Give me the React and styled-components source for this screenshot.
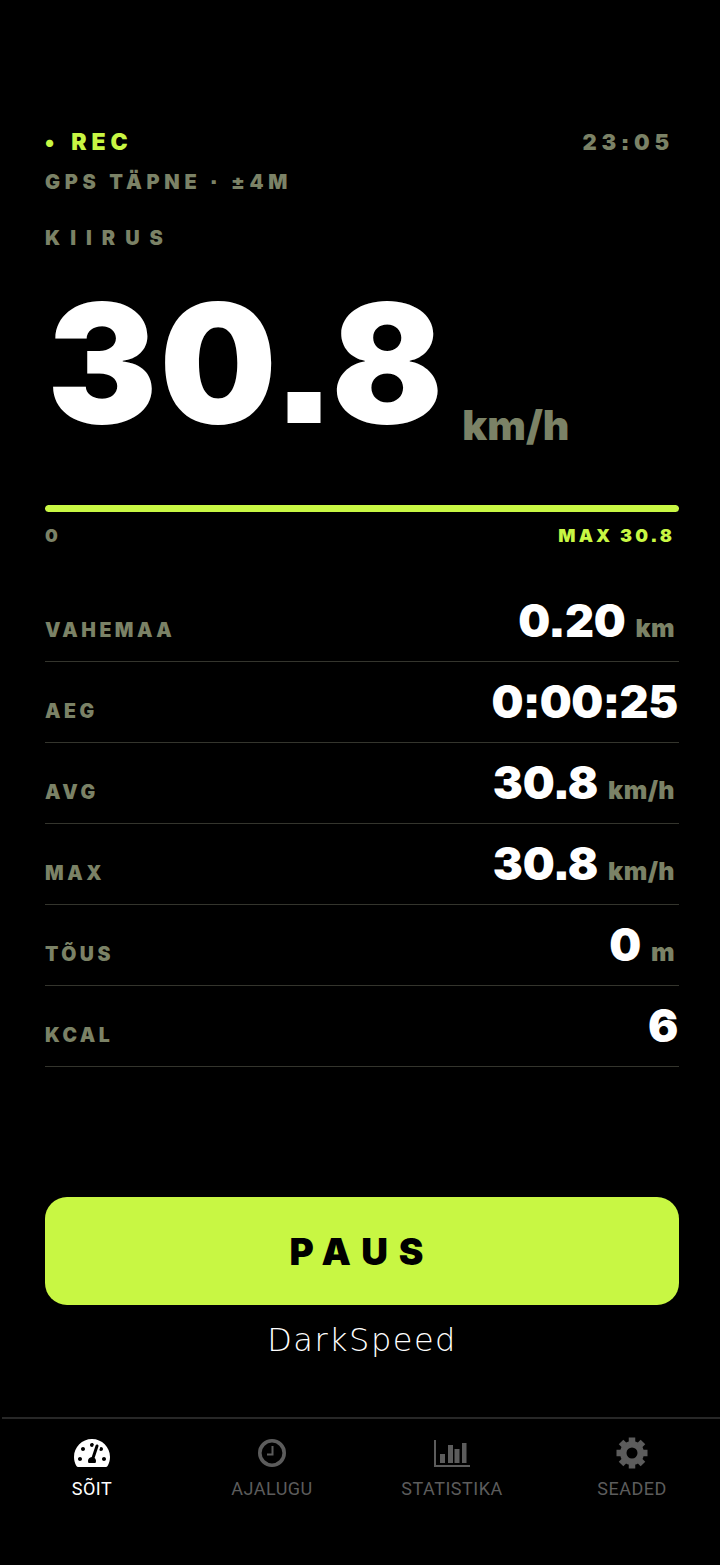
import React from "react";
import styled, { createGlobalStyle } from "styled-components";
import { FaTachometerAlt } from "react-icons/fa";

const lime = "#c8f743";
const olive = "#7b8266";
const heavy = `Inter, "Liberation Sans", Arial, sans-serif`;

const GlobalStyle = createGlobalStyle`
    html, body {
        margin: 0;
        background: #000;
    }
`;

const Screen = styled.div`
    width: 720px;
    height: 1565px;
    background: #000;
    display: flex;
    flex-direction: column;
    font-family: ${heavy};
    font-weight: 900;
    font-feature-settings: "ss07";
    overflow: hidden;
`;

const Main = styled.main`
    height: 1417px;
    box-sizing: border-box;
    padding: 128px 41px 0 45px;
    display: flex;
    flex-direction: column;
`;

const TopRow = styled.div`
    display: flex;
    justify-content: space-between;
    align-items: center;
    height: 28px;
    padding-right: 5px;
`;

const Rec = styled.span`
    color: ${lime};
    font-size: 23px;
    letter-spacing: 4.8px;
    word-spacing: 3px;
`;

const Clock = styled.span`
    color: ${olive};
    font-size: 22px;
    letter-spacing: 4.8px;
`;

const Label = styled.div`
    color: ${olive};
    font-size: 20px;
    letter-spacing: ${(props) => props.spacing}px;
    margin-top: ${(props) => props.top}px;
    line-height: 24px;
`;

const SpeedRow = styled.div`
    display: flex;
    align-items: flex-end;
    margin-top: 35px;
    height: 198px;
`;

const SpeedValue = styled.span`
    color: #fff;
    font-size: 165px;
    line-height: 200px;
    letter-spacing: 2px;
    margin-left: 2px;
    margin-bottom: 20px;
`;

const SpeedUnit = styled.span`
    color: ${olive};
    font-size: 41px;
    line-height: 46px;
    margin-left: 17px;
    margin-bottom: 35px;
`;

const Track = styled.div`
    height: 7px;
    margin-top: 22px;
    background: #2a2c22;
    border-radius: 4px;
    overflow: hidden;
`;

const Fill = styled.div`
    height: 100%;
    background: ${lime};
    border-radius: 4px;
`;

const Scale = styled.div`
    display: flex;
    justify-content: space-between;
    margin-top: 13px;
    height: 22px;
    padding-right: 4px;
    font-size: 18px;
    line-height: 22px;
    letter-spacing: 3.100px;
`;

const ScaleText = styled.span`
    color: ${(props) => props.color};
`;

const Stats = styled.div`
    margin-top: 34px;
`;

const StatRow = styled.div`
    height: 81px;
    box-sizing: border-box;
    border-bottom: 1px solid #34352d;
    display: flex;
    justify-content: space-between;
    align-items: flex-end;
    padding-bottom: 20px;
`;

const StatName = styled.span`
    color: ${olive};
    font-size: 19.500px;
    line-height: 22px;
    letter-spacing: 3.500px;
`;

const StatValue = styled.span`
    display: flex;
    align-items: baseline;
    gap: 10px;
    padding-right: 1px;
`;

const Num = styled.span`
    color: #fff;
    font-size: 45px;
    line-height: 40px;
    letter-spacing: -0.3px;
`;

const Unit = styled.span`
    color: ${olive};
    font-size: 25px;
    line-height: 24px;
    letter-spacing: 0.4px;
    padding-right: 3px;
`;

const PauseButton = styled.button`
    height: 108px;
    margin-top: 130px;
    border: 0;
    border-radius: 22px;
    background: ${lime};
    color: #000;
    font-family: ${heavy};
    font-weight: 900;
    font-feature-settings: "ss07";
    font-size: 37px;
    letter-spacing: 11px;
`;

const Brand = styled.div`
    margin-top: 15px;
    text-align: center;
    color: #fff;
    font-family: "DejaVu Sans", sans-serif;
    font-weight: 200;
    font-size: 32px;
    line-height: 40px;
    letter-spacing: 1.500px;
`;

const TabBar = styled.nav`
    margin-left: 2px;
    border-top: 2px solid #272727;
    display: grid;
    grid-template-columns: repeat(4, 180px);
    padding-top: 17px;
`;

const Tab = styled.div`
    display: flex;
    flex-direction: column;
    align-items: center;
    gap: 8px;
    color: ${(props) => (props.active ? "#fff" : "#5c5c5c")};
`;

const TabIcon = styled.div`
    height: 34px;
    display: flex;
    align-items: center;
    justify-content: center;
    font-size: 36px;
`;

const TabLabel = styled.span`
    font-family: Roboto, sans-serif;
    font-weight: 400;
    font-size: 18px;
    line-height: 22px;
    letter-spacing: 0.5px;
`;

const ClockIcon = () => (
    <svg width="28" height="28" viewBox="0 0 28 28" fill="none" stroke="currentColor">
        <circle cx="14" cy="14" r="12.200" strokeWidth="3.600" />
        <path d="M14.500 7V15.500H9" strokeWidth="2" />
    </svg>
);

const ChartIcon = () => (
    <svg width="36" height="27" viewBox="0 0 36 27" fill="currentColor">
        <path d="M0 0h2v25h34v2H0z" />
        <path d="M6 14h5v9H6zM14 5h5v18h-5zM20.500 9h5v14h-5zM28 3h4.500v20H28z" />
    </svg>
);

const GearIcon = () => (
    <svg width="32" height="32" viewBox="0 0 32 32" fill="currentColor">
        <circle cx="16" cy="16" r="8.750" fill="none" stroke="currentColor" strokeWidth="6.500" />
        {[0, 45, 90, 135, 180, 225, 270, 315].map((angle) => (
            <rect key={angle} x="12.750" y="0.500" width="6.500" height="5" transform={`rotate(${angle} 16 16)`} />
        ))}
    </svg>
);

const rows = [
    { name: "VAHEMAA", value: "0.20", unit: "km" },
    { name: "AEG", value: "0:00:25" },
    { name: "AVG", value: "30.8", unit: "km/h" },
    { name: "MAX", value: "30.8", unit: "km/h" },
    { name: "TÕUS", value: "0", unit: "m" },
    { name: "KCAL", value: "6" },
];

const tabs = [
    { label: "SÕIT", icon: <FaTachometerAlt />, active: true },
    { label: "AJALUGU", icon: <ClockIcon /> },
    { label: "STATISTIKA", icon: <ChartIcon /> },
    { label: "SEADED", icon: <GearIcon /> },
];

export default function App() {
    return (
        <Screen>
            <GlobalStyle />
            <Main>
                <TopRow>
                    <Rec>• REC</Rec>
                    <Clock>23:05</Clock>
                </TopRow>
                <Label top={14} spacing={4.7}>GPS TÄPNE · ±4M</Label>
                <Label top={32} spacing={10}>KIIRUS</Label>
                <SpeedRow>
                    <SpeedValue>30.8</SpeedValue>
                    <SpeedUnit>km/h</SpeedUnit>
                </SpeedRow>
                <Track>
                    <Fill style={{ width: "100%" }} />
                </Track>
                <Scale>
                    <ScaleText color={olive}>0</ScaleText>
                    <ScaleText color={lime}>MAX 30.8</ScaleText>
                </Scale>
                <Stats>
                    {rows.map((row) => (
                        <StatRow key={row.name}>
                            <StatName>{row.name}</StatName>
                            <StatValue>
                                <Num>{row.value}</Num>
                                {row.unit && <Unit>{row.unit}</Unit>}
                            </StatValue>
                        </StatRow>
                    ))}
                </Stats>
                <PauseButton>PAUS</PauseButton>
                <Brand>DarkSpeed</Brand>
            </Main>
            <TabBar>
                {tabs.map((tab) => (
                    <Tab key={tab.label} active={tab.active}>
                        <TabIcon>{tab.icon}</TabIcon>
                        <TabLabel>{tab.label}</TabLabel>
                    </Tab>
                ))}
            </TabBar>
        </Screen>
    );
}
